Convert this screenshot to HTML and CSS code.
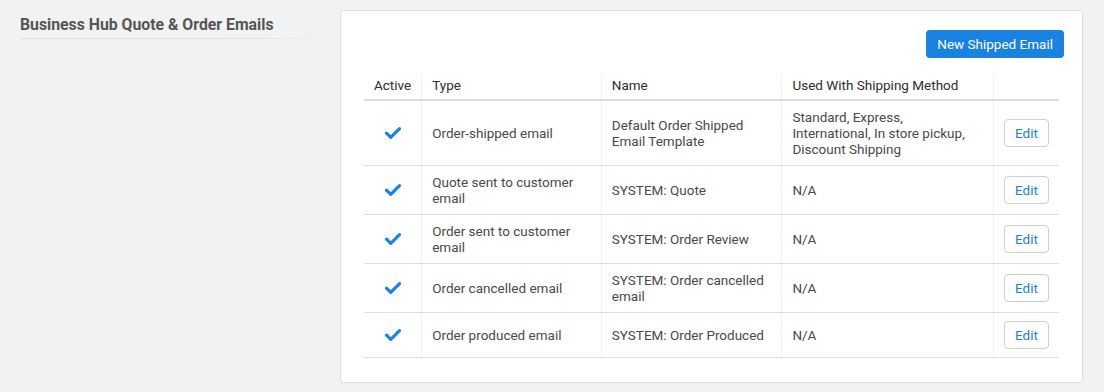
FILE: index.html
```html
<!DOCTYPE html>
<html lang="en">
<head>
    <meta charset="UTF-8">
    <title>Business Hub Quote &amp; Order Emails</title>
    <link rel="stylesheet" href="styles.css">
</head>
<body>
    <div class="page">
        <div class="side">
            <h2 class="section-title">Business Hub Quote &amp; Order Emails</h2>
        </div>

        <div class="card">
            <div class="toolbar">
                <button class="btn-primary">New Shipped Email</button>
            </div>

            <table class="emails">
                <thead>
                    <tr>
                        <th class="col-active">Active</th>
                        <th class="col-type">Type</th>
                        <th class="col-name">Name</th>
                        <th class="col-used">Used With Shipping Method</th>
                        <th class="col-edit"></th>
                    </tr>
                </thead>
                <tbody>
                    <tr>
                        <td class="col-active"><svg class="check" viewBox="0 0 16 12"><path d="M1.5 6.2 L5.8 10.3 L14.5 1.7" /></svg></td>
                        <td>Order-shipped email</td>
                        <td>Default Order Shipped Email Template</td>
                        <td>Standard, Express,<br>International, In store pickup, Discount Shipping</td>
                        <td class="col-edit"><button class="btn-edit">Edit</button></td>
                    </tr>
                    <tr>
                        <td class="col-active"><svg class="check" viewBox="0 0 16 12"><path d="M1.5 6.2 L5.8 10.3 L14.5 1.7" /></svg></td>
                        <td>Quote sent to customer email</td>
                        <td>SYSTEM: Quote</td>
                        <td>N/A</td>
                        <td class="col-edit"><button class="btn-edit">Edit</button></td>
                    </tr>
                    <tr>
                        <td class="col-active"><svg class="check" viewBox="0 0 16 12"><path d="M1.5 6.2 L5.8 10.3 L14.5 1.7" /></svg></td>
                        <td>Order sent to customer email</td>
                        <td>SYSTEM: Order Review</td>
                        <td>N/A</td>
                        <td class="col-edit"><button class="btn-edit">Edit</button></td>
                    </tr>
                    <tr>
                        <td class="col-active"><svg class="check" viewBox="0 0 16 12"><path d="M1.5 6.2 L5.8 10.3 L14.5 1.7" /></svg></td>
                        <td>Order cancelled email</td>
                        <td>SYSTEM: Order cancelled email</td>
                        <td>N/A</td>
                        <td class="col-edit"><button class="btn-edit">Edit</button></td>
                    </tr>
                    <tr>
                        <td class="col-active"><svg class="check" viewBox="0 0 16 12"><path d="M1.5 6.2 L5.8 10.3 L14.5 1.7" /></svg></td>
                        <td>Order produced email</td>
                        <td>SYSTEM: Order Produced</td>
                        <td>N/A</td>
                        <td class="col-edit"><button class="btn-edit">Edit</button></td>
                    </tr>
                </tbody>
            </table>
        </div>
    </div>
</body>
</html>
```

FILE: styles.css
```css
* {
    margin: 0;
    padding: 0;
    box-sizing: border-box;
}

body {
    font-family: Roboto, 'Liberation Sans', sans-serif;
    background: #f1f2f4;
    color: #444;
    font-size: 13.5px;
}

.page {
    display: grid;
    grid-template-columns: 316px 1fr;
    gap: 4px;
    padding: 10px 21px 10px 20px;
}

.section-title {
    font-size: 15.8px;
    font-weight: 700;
    color: #555;
    padding: 7px 0 5px;
    line-height: 16px;
    border-bottom: 1px solid transparent;
    border-image: linear-gradient(90deg, #dcdcdc 0%, #e2e2e2 75%, rgba(228, 228, 228, 0) 100%) 1;
}

.card {
    background: #fff;
    border: 1px solid #dcdcdc;
    border-radius: 4px;
    padding: 19px 18px 24px 23px;
}

.toolbar {
    display: flex;
    justify-content: flex-end;
    margin-bottom: 17px;
}

.btn-primary {
    font-family: inherit;
    font-size: 13.5px;
    color: #fff;
    background: #1a82e2;
    border: none;
    border-radius: 4px;
    height: 28px;
    padding: 0 11px;
    cursor: pointer;
}

.emails {
    width: 695px;
    border-collapse: collapse;
}

.emails th {
    text-align: left;
    font-weight: 400;
    color: #2e2e2e;
    padding: 2px 10px 6px;
    line-height: 16px;
    border-bottom: 2px solid #dedede;
    border-left: 1px solid #f0f0f0;
}

.emails td {
    padding: 8px 10px;
    line-height: 16px;
    color: #4a4a4a;
    vertical-align: middle;
    border-bottom: 1px solid #dedede;
    border-left: 1px solid #f0f0f0;
}

.emails th:first-child,
.emails td:first-child {
    border-left: none;
}

.col-active {
    width: 57px;
    text-align: center;
}

.emails th.col-active {
    text-align: center;
}

.col-type {
    width: 180px;
}

.col-name {
    width: 181px;
}

.col-used {
    width: 212px;
}

.check {
    display: block;
    width: 16px;
    height: 12px;
    margin: 0 auto;
}

.check path {
    fill: none;
    stroke: #1a82e2;
    stroke-width: 3.2;
    stroke-linecap: round;
    stroke-linejoin: round;
}

.btn-edit {
    font-family: inherit;
    font-size: 13.5px;
    color: #1a82e2;
    background: #fff;
    border: 1px solid #cfcfcf;
    border-radius: 4px;
    width: 45px;
    height: 28px;
    cursor: pointer;
    display: block;
}
```
